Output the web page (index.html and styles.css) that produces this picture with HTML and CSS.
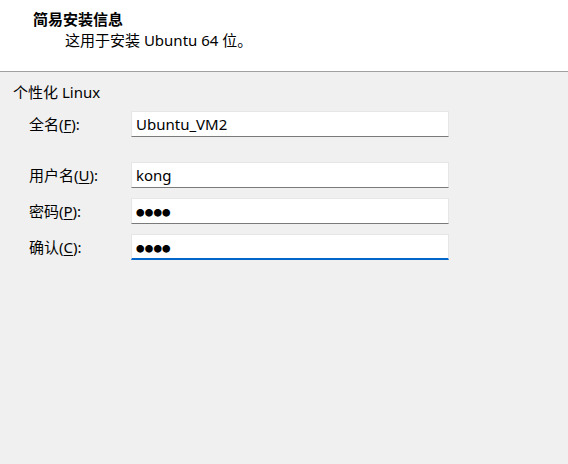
FILE: index.html
```html
<!DOCTYPE html>
<html lang="zh-CN">
<head>
<meta charset="utf-8">
<title>简易安装信息</title>
<link rel="stylesheet" href="styles.css">
</head>
<body>
<header class="head">
  <div class="head-title">简易安装信息</div>
  <div class="head-sub">这用于安装 Ubuntu 64 位。</div>
</header>
<main class="body">
  <div class="group-title">个性化 Linux</div>
  <form class="form">
    <label class="row">
      <span class="label">全名(<u>F</u>):</span>
      <input class="field" type="text" value="Ubuntu_VM2">
    </label>
    <label class="row row-sep">
      <span class="label">用户名(<u>U</u>):</span>
      <input class="field" type="text" value="kong">
    </label>
    <label class="row">
      <span class="label">密码(<u>P</u>):</span>
      <input class="field dots" type="text" value="●●●●">
    </label>
    <label class="row">
      <span class="label">确认(<u>C</u>):</span>
      <input class="field dots focused" type="text" value="●●●●">
    </label>
  </form>
</main>
</body>
</html>
```
FILE: styles.css
```css
* { box-sizing: border-box; }
html, body { margin: 0; padding: 0; }
body {
  width: 568px;
  height: 464px;
  background: #f0f0f0;
  font-family: "Noto Sans", "Noto Sans CJK SC", sans-serif;
  font-size: 15px;
  color: #000;
  overflow: hidden;
}
.head {
  background: #fff;
  height: 72px;
  border-bottom: 1px solid #a0a0a0;
  padding: 9px 0 0 33px;
}
.head-title {
  font-weight: bold;
  line-height: 20px;
}
.head-sub {
  line-height: 20px;
  padding-left: 32px;
  margin-top: 1px;
}
.body {
  padding: 10px 0 0 13px;
}
.group-title {
  line-height: 20px;
}
.form {
  display: flex;
  flex-direction: column;
  gap: 10px;
  margin-top: 9px;
}
.row {
  display: flex;
  align-items: center;
  height: 26px;
}
.row-sep { margin-top: 15px; }
.label {
  width: 118px;
  padding-left: 16px;
  line-height: 20px;
}
.label u { text-underline-offset: 2px; }
.field {
  width: 318px;
  height: 26px;
  border: 1px solid #e6e6e6;
  border-bottom: 1px solid #7a7a7a;
  background: #fff;
  padding: 0 4px;
  font: inherit;
  color: #000;
  outline: none;
  border-radius: 0;
}
.dots {
  font-family: "Noto Sans CJK SC", sans-serif;
  font-size: 8.5px;
  letter-spacing: 0.2px;
  padding-top: 2px;
}
.focused {
  border-bottom: 2px solid #0066cc;
}
```
